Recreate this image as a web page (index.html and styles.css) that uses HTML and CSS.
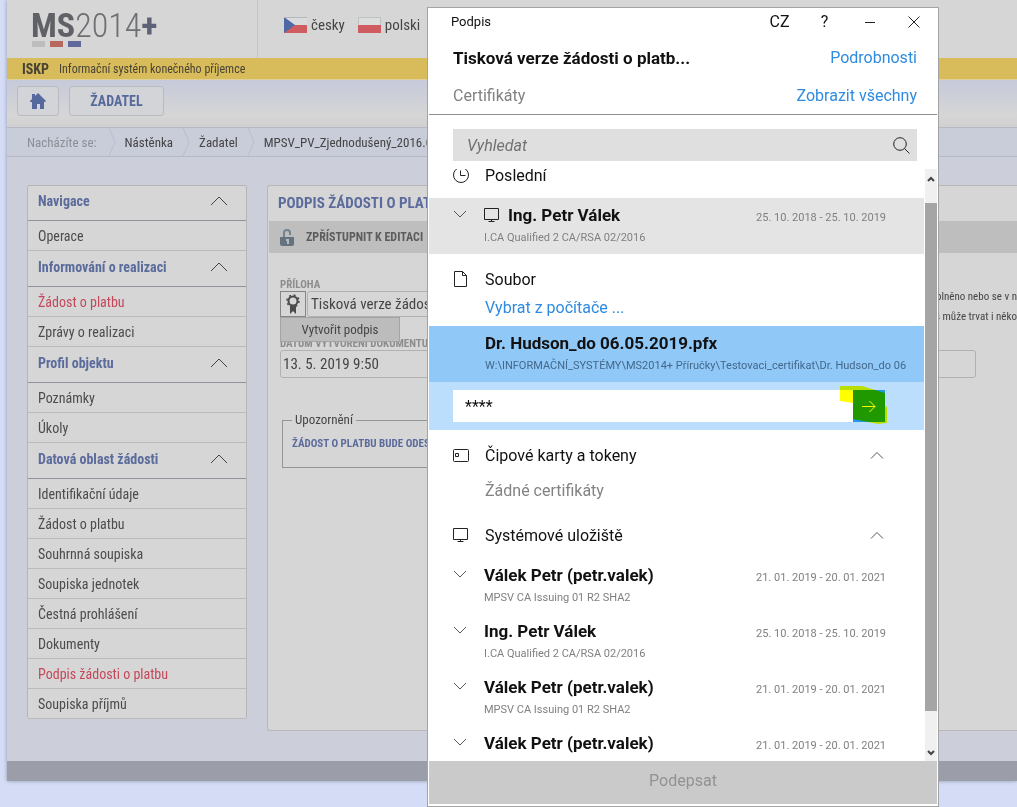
FILE: index.html
```html
<!DOCTYPE html>
<html lang="cs">
<head>
<meta charset="utf-8">
<title>MS2014+ – Podpis žádosti o platbu</title>
<link rel="stylesheet" href="styles.css">
</head>
<body>
<svg class="defs" aria-hidden="true">
  <symbol id="up" viewBox="0 0 18 10"><path d="M1 9 9 1l8 8"/></symbol>
  <symbol id="up-small" viewBox="0 0 14 8"><path d="M1 7.500l6-6 6 6"/></symbol>
  <symbol id="down" viewBox="0 0 14 8"><path d="M1 1l6 6 6-6"/></symbol>
  <symbol id="monitor" viewBox="0 0 16 16"><path d="M.5 1.500h14v11H.5zM7.500 12.500v2M4.500 14.500h6"/></symbol>
</svg>
<div class="page">
  <header class="header">
    <div class="brand">
      <div class="logo"><b>MS</b>2014<b class="plus">+</b></div>
      <div class="bars"><i></i><i></i><i></i></div>
    </div>
    <nav class="langs">
      <a href="#"><svg width="23" height="16" viewBox="0 0 23 16"><path fill="#d9dbdc" d="M0 0h23v8H0z"/><path fill="#cf5c60" d="M0 8h23v8H0z"/><path fill="#4f69a6" d="M0 0l11 8-11 8z"/><path fill="none" stroke="#b4b7ba" d="M0 .5h23"/></svg>česky</a>
      <a href="#"><svg width="23" height="16" viewBox="0 0 23 16"><path fill="#dcdede" stroke="#bfc0c1" d="M.5.5h22v15H.5z"/><path fill="#cf5c60" d="M0 8h23v8H0z"/></svg>polski</a>
    </nav>
  </header>
  <div class="strip"><b>ISKP</b><span>Informační systém konečného příjemce</span></div>
  <div class="toolbar">
    <button class="tool home" aria-label="Domů"><svg width="16" height="16" viewBox="0 0 16 16" fill="#56699c"><path d="M8 0l8 8-1 1h-1v7h-4v-5H7v5H2V9H0V8l2-2V1h3v2z"/></svg></button>
    <button class="tool">ŽADATEL</button>
  </div>
  <nav class="crumbs">
    <span class="here">Nacházíte se:</span>
    <svg width="8" height="28" viewBox="0 0 8 28"><path d="M1 0l6 14-6 14"/></svg>
    <a href="#">Nástěnka</a>
    <svg width="8" height="28" viewBox="0 0 8 28"><path d="M1 0l6 14-6 14"/></svg>
    <a href="#">Žadatel</a>
    <svg width="8" height="28" viewBox="0 0 8 28"><path d="M1 0l6 14-6 14"/></svg>
    <a href="#">MPSV_PV_Zjednodušený_2016.0</a>
  </nav>
  <main class="content">
    <nav class="side">
      <button class="group">Navigace<svg><use href="#up"/></svg></button>
      <a href="#">Operace</a>
      <button class="group">Informování o realizaci<svg><use href="#up"/></svg></button>
      <a href="#" class="active">Žádost o platbu</a>
      <a href="#">Zprávy o realizaci</a>
      <button class="group">Profil objektu<svg><use href="#up"/></svg></button>
      <a href="#">Poznámky</a>
      <a href="#">Úkoly</a>
      <button class="group">Datová oblast žádosti<svg><use href="#up"/></svg></button>
      <a href="#">Identifikační údaje</a>
      <a href="#">Žádost o platbu</a>
      <a href="#">Souhrnná soupiska</a>
      <a href="#">Soupiska jednotek</a>
      <a href="#">Čestná prohlášení</a>
      <a href="#">Dokumenty</a>
      <a href="#" class="active">Podpis žádosti o platbu</a>
      <a href="#">Soupiska příjmů</a>
    </nav>
    <section class="panel">
      <h1>PODPIS ŽÁDOSTI O PLATBU</h1>
      <div class="actions"><button><svg width="14" height="17" viewBox="0 0 14 17"><path fill="none" stroke="#75838f" stroke-width="2" d="M4 8V4c0-4 6-4 6 0v2"/><path fill="#66737e" d="M0 8h14v7q0 2-2 2H2q-2 0-2-2z"/><path fill="#b5bcc0" d="M6 10h3v5H7v-3H6z"/></svg>ZPŘÍSTUPNIT K EDITACI</button></div>
      <form class="form">
        <label for="att">PŘÍLOHA</label>
        <div class="attach">
          <button type="button" class="seal" aria-label="Podpis"><svg width="14" height="20" viewBox="0 0 14 20"><circle cx="7" cy="7" r="4.500" fill="none" stroke="#4b4b4b" stroke-width="2"/><circle cx="7" cy="7" r="6" fill="none" stroke="#4b4b4b" stroke-width="1.500" stroke-dasharray="2 2.700"/><path fill="#4b4b4b" d="M4 12h6v8l-3-3-3 3z"/></svg></button>
          <input id="att" value="Tisková verze žádosti o platbu">
          <button type="button" class="menu">Vytvořit podpis</button>
        </div>
        <p class="note">vyplněno nebo se v n<br>proces může trvat i něko</p>
        <label for="dat">DATUM VYTVOŘENÍ DOKUMENTU</label>
        <input id="dat" class="date" value="13. 5. 2019 9:50">
        <fieldset><legend>Upozornění</legend>ŽÁDOST O PLATBU BUDE ODESLÁNA</fieldset>
      </form>
    </section>
  </main>
  <footer class="foot"></footer>
</div>

<div class="dialog" role="dialog" aria-label="Podpis">
  <div class="titlebar">
    <span>Podpis</span>
    <button>CZ</button>
    <button>?</button>
    <button aria-label="Minimalizovat"><svg width="12" height="12" viewBox="0 0 12 12"><path d="M1 6.500h10"/></svg></button>
    <button aria-label="Zavřít"><svg width="12" height="12" viewBox="0 0 12 12"><path d="M.5.5l11 11M11.500.5l-11 11"/></svg></button>
  </div>
  <div class="line first"><h2>Tisková verze žádosti o platb...</h2><a href="#">Podrobnosti</a></div>
  <div class="line second"><span>Certifikáty</span><a href="#">Zobrazit všechny</a></div>
  <div class="search">
    <input type="text" placeholder="Vyhledat" aria-label="Vyhledat">
    <svg width="17" height="17" viewBox="0 0 17 17"><circle cx="7" cy="7" r="6.300"/><path d="M11.500 11.500l5 5"/></svg>
  </div>
  <div class="scroll">
    <div class="list">
      <div class="sect recent"><svg width="16" height="16" viewBox="0 0 16 16"><circle cx="8" cy="8" r="7.500"/><path d="M7.500 3.500v5h5"/></svg><span>Poslední</span></div>
      <div class="cert hover"><svg class="chev"><use href="#down"/></svg><div><h3><svg class="mon"><use href="#monitor"/></svg>Ing. Petr Válek</h3><p>I.CA Qualified 2 CA/RSA 02/2016</p></div><time>25. 10. 2018 - 25. 10. 2019</time></div>
      <div class="sect"><svg width="16" height="16" viewBox="0 0 16 16"><path d="M1.500.5h8l4 4v11h-12zM9.500.5v4h4"/></svg><span>Soubor</span></div>
      <a href="#" class="pick">Vybrat z počítače ...</a>
      <div class="cert chosen"><i></i><div><h3>Dr. Hudson_do 06.05.2019.pfx</h3><p>W:\INFORMAČNÍ_SYSTÉMY\MS2014+ Příručky\Testovaci_certifikat\Dr. Hudson_do 06</p></div></div>
      <div class="pass">
        <input type="text" value="****" aria-label="Heslo">
        <button aria-label="Pokračovat"><svg width="16" height="14" viewBox="0 0 16 14"><path d="M1 7.500h13M8.500 2l5.500 5.500L8.500 13"/></svg></button>
        <svg class="marker" width="48" height="40" viewBox="0 0 48 40"><path fill="#ff0" d="M0 0h22l23 7v13l2 1v16l-9 1-25-5V17L0 15z"/></svg>
      </div>
      <div class="sect"><svg width="16" height="16" viewBox="0 0 16 16"><rect x=".5" y="2.500" width="15" height="12" rx="1"/><path d="M2.500 6.500h3v3h-3z"/></svg><span>Čipové karty a tokeny</span><svg class="chev"><use href="#up-small"/></svg></div>
      <p class="none">Žádné certifikáty</p>
      <div class="sect store"><svg width="16" height="16"><use href="#monitor"/></svg><span>Systémové uložiště</span><svg class="chev"><use href="#up-small"/></svg></div>
      <div class="cert"><svg class="chev"><use href="#down"/></svg><div><h3>Válek Petr (petr.valek)</h3><p>MPSV CA Issuing 01 R2 SHA2</p></div><time>21. 01. 2019 - 20. 01. 2021</time></div>
      <div class="cert"><svg class="chev"><use href="#down"/></svg><div><h3>Ing. Petr Válek</h3><p>I.CA Qualified 2 CA/RSA 02/2016</p></div><time>25. 10. 2018 - 25. 10. 2019</time></div>
      <div class="cert"><svg class="chev"><use href="#down"/></svg><div><h3>Válek Petr (petr.valek)</h3><p>MPSV CA Issuing 01 R2 SHA2</p></div><time>21. 01. 2019 - 20. 01. 2021</time></div>
      <div class="cert"><svg class="chev"><use href="#down"/></svg><div><h3>Válek Petr (petr.valek)</h3></div><time>21. 01. 2019 - 20. 01. 2021</time></div>
    </div>
    <div class="bar">
      <svg width="8" height="6" viewBox="0 0 8 6"><path d="M1 5l3-3 3 3"/></svg>
      <div class="track"><div class="thumb"></div></div>
      <svg width="8" height="6" viewBox="0 0 8 6"><path d="M1 1l3 3 3-3"/></svg>
    </div>
  </div>
  <button class="sign" disabled>Podepsat</button>
</div>
</body>
</html>
```

FILE: styles.css
```css
* { box-sizing: border-box; }
body {
  margin: 0;
  height: 100vh;
  overflow: hidden;
  position: relative;
  background: #d5ddf6;
  color: #454545;
  font-family: "Roboto Condensed", "Liberation Sans Narrow", Roboto, sans-serif;
  font-size: 14px;
}
a { color: inherit; text-decoration: none; }
button, input { font: inherit; color: inherit; margin: 0; padding: 0; border: 0; background: none; }
h1, h2, h3, p { margin: 0; font-size: inherit; }
svg { flex: none; display: block; }
.defs { position: absolute; width: 0; height: 0; }

.page { margin-left: 7px; background: #cccfd9; box-shadow: 0 0 4px #8f96ad; }
.header { display: flex; height: 58px; background: #d6d6d6; }
.brand { width: 251px; padding: 6px 0 0 24px; border-right: 1px solid #c4c4c4; }
.logo { font-size: 34px; line-height: 38px; font-weight: 300; color: #6d6f73; height: 35px; white-space: nowrap; }
.logo b { font-weight: 700; color: #5f6166; }
.logo .plus { color: #5f6176; }
.bars { display: flex; gap: 5px; padding-left: 1px; }
.bars i { width: 13px; height: 6px; background: #bdbdbd; }
.bars i:nth-child(2) { background: #b8695e; }
.bars i:nth-child(3) { background: #616b9b; }
.langs { display: flex; gap: 13px; padding: 16px 0 0 26px; height: 36px; font-size: 15px; line-height: 18px; }
.langs a { display: flex; gap: 4px; align-items: center; height: 18px; }
.strip { display: flex; align-items: center; gap: 10px; height: 22px; padding: 1px 15px 0; background: #d8bc5c; border-bottom: 1px solid #dfcf98; font-size: 12px; color: #494334; }
.strip b { font-size: 14px; }
.toolbar { display: flex; gap: 10px; height: 47px; padding: 6px 10px; background: linear-gradient(#c6cada, #d6d6d6 75%, #d0d0d2); }
.tool { display: flex; align-items: center; justify-content: center; width: 95px; height: 30px; border: 1px solid #b9bbc1; border-radius: 3px; background: #d3d4d8; color: #56699c; font-weight: 700; }
.home { width: 42px; }
.crumbs { display: flex; align-items: center; gap: 9px; height: 30px; padding-left: 20px; background: #c9ccd9; border: solid #b6b9c6; border-width: 1px 0; font-size: 13px; white-space: nowrap; }
.crumbs svg { fill: none; stroke: #b9bdcc; }
.here { margin-right: 2px; color: #8d8f97; }
.content { display: flex; align-items: flex-start; gap: 20px; padding: 28px 0 30px 20px; }

.side { width: 220px; flex: none; border: solid #b3b5b9; border-width: 0 1px; border-radius: 3px; background: #d6d6d6; }
.side a { display: flex; align-items: center; height: 30px; padding-left: 10px; border-bottom: 1px solid #b9bbbe; color: #4c4c4c; }
.side a.active { color: #c4485a; }
.group { display: flex; align-items: center; justify-content: space-between; width: 100%; height: 36px; padding: 0 18px 4px 10px; border-bottom: 1px solid #909399; color: #5b6b9c; font-weight: 700; }
.group:first-child { border-top: 1px solid #b3b5b9; }
.group svg { width: 18px; height: 10px; fill: none; stroke: #444; }

.panel { flex: 1; min-width: 0; height: 546px; border: 1px solid #b6b8be; border-right: 0; border-radius: 3px 0 0 3px; background: #d6d6d6; }
.panel h1 { padding-left: 10px; height: 35px; line-height: 35px; font-size: 15px; color: #5b6b9c; }
.actions { display: flex; align-items: center; height: 32px; padding-left: 11px; background: #bebebe; margin-left: 1px; }
.actions button { display: flex; align-items: center; gap: 12px; font-weight: 700; font-size: 12px; color: #5c5c5c; }
.form { display: grid; grid-template-columns: 26px 1fr 41px; padding: 26px 0 0 12px; }
.form label { grid-column: 1 / 4; font-size: 11px; line-height: 12px; font-weight: 700; color: #8d8d8d; }
.form label:first-child { grid-row: 1; }
.attach { grid-column: 1 / 3; grid-row: 2; position: relative; display: flex; gap: 1px; width: 50%; height: 26px; margin-bottom: 21px; }
.seal { display: flex; align-items: center; justify-content: center; width: 26px; border: 1px solid #858585; }
.attach input { flex: 1; min-width: 0; padding-left: 3px; border: 1px solid #b1b1b1; border-radius: 3px; font-size: 15px; }
.menu { position: absolute; left: 0; top: 26px; width: 120px; height: 25px; border: 1px solid #a4a4a4; background: #bcbcbc; font-size: 13px; }
.note { grid-column: 1 / 4; grid-row: 1 / 3; justify-self: end; padding-top: 8px; text-align: right; font-size: 11px; line-height: 20px; white-space: nowrap; }
.date { grid-column: 1 / 3; height: 28px; padding-left: 2px; border: 1px solid #b1b1b1; border-radius: 3px; font-size: 15px; }
fieldset { grid-column: 1 / 3; width: 80%; height: 56px; margin: 34px 0 0 2px; padding: 9px 9px 0; border: 1px solid #949494; font-size: 11px; font-weight: 700; color: #5b6b9c; white-space: nowrap; }
legend { padding: 0 3px; font-size: 13px; line-height: 16px; font-weight: 400; color: #454545; }
.foot { height: 20px; background: #9b9ea8; }

.dialog { position: absolute; left: 427px; right: 78px; top: 7px; bottom: 0; display: flex; flex-direction: column; padding: 0 1px; border: 1px solid #a3a3a3; background: #fff; color: #111; font-family: Roboto, sans-serif; font-size: 16px; }
.dialog svg { fill: none; stroke: #222; }
.dialog a { color: #2f8be0; }
.titlebar { display: flex; align-items: center; height: 27px; padding: 0 16px 0 22px; font-size: 13px; }
.titlebar span { margin-right: auto; }
.titlebar button { display: flex; justify-content: center; width: 45px; font-size: 16px; }
.titlebar button:last-child { width: 14px; margin-left: 15px; }
.line { display: flex; align-items: center; justify-content: space-between; height: 43px; padding: 0 20px 0 24px; }
.first { padding-top: 2px; }
.line h2 { font-size: 17px; font-weight: 700; }
.second { height: 37px; padding-bottom: 2px; border-bottom: 1px solid #8f8f8f; color: #818181; }
.search { display: flex; align-items: center; height: 32px; margin: 14px 20px 8px 24px; padding: 0 7px 0 14px; background: #dfdfdf; }
.search input { flex: 1; font-style: italic; outline: 0; }
.search input::placeholder { color: #717171; opacity: 1; }
.scroll { display: flex; gap: 1px; flex: 1; min-height: 0; }
.list { flex: 1; min-width: 0; overflow: hidden; }
.sect { display: grid; grid-template-columns: 32px 1fr 14px; align-items: center; height: 50px; padding: 0 40px 0 24px; }
.dialog .chev { width: 14px; height: 8px; stroke: #555; }
.recent { height: 46px; margin-top: -17px; }
.store { height: 48px; padding-top: 2px; }
.cert { display: grid; grid-template-columns: 31px 1fr auto; height: 56px; padding: 7px 38px 0 24px; }
.cert .chev { margin-top: 5px; }
.cert h3 { display: flex; align-items: center; gap: 8px; height: 20px; font-size: 17px; white-space: nowrap; }
.cert p { font-size: 11px; line-height: 25px; color: #808080; white-space: nowrap; }
.cert time { padding-top: 6px; font-size: 11px; line-height: 14px; color: #808080; }
.mon { width: 16px; height: 16px; }
.hover { background: #e4e4e4; }
.pick { display: block; padding-left: 56px; height: 22px; line-height: 8px; }
.chosen { grid-template-columns: 32px 1fr; padding-right: 0; background: #90c8f8; }
.chosen p { color: #43688a; }
.pass { display: flex; position: relative; padding: 8px 39px 8px 24px; background: #badefb; }
.pass input { flex: 1; min-width: 0; height: 32px; padding-left: 12px; background: #fff; outline: 0; }
.pass button { display: flex; align-items: center; justify-content: center; width: 32px; height: 32px; background: #2099e8; }
.pass button svg { stroke: #fff; }
.marker { position: absolute; right: 36px; top: 4px; mix-blend-mode: multiply; }
.dialog .marker { stroke: none; }
.none { padding-left: 56px; height: 30px; line-height: 22px; color: #838383; }
.bar { display: flex; flex-direction: column; align-items: center; gap: 6px; width: 12px; padding: 7px 0 5px; background: #f0f0f0; }
.bar svg { stroke: #444; stroke-width: 2; }
.track { flex: 1; width: 100%; padding: 15px 0 33px; }
.thumb { height: 100%; background: #a5a5a5; }
.sign { height: 43px; margin-bottom: 2px; padding-bottom: 4px; background: #cacaca; color: #929292; }
```
